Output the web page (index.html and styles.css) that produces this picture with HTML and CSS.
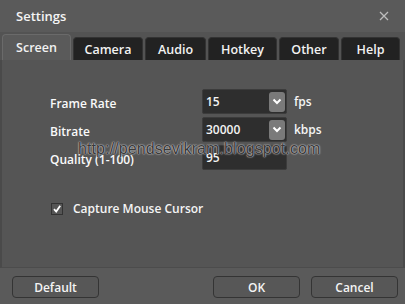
FILE: index.html
```html
<!DOCTYPE html>
<html>
<head>
<meta charset="utf-8">
<link rel="stylesheet" href="styles.css">
</head>
<body>
<div class="window">
  <div class="titlebar">
    <span class="title">Settings</span>
    <svg class="close" width="10" height="10" viewBox="0 0 10 10"><path d="M1 1L9 9M9 1L1 9" stroke="#bdbdbd" stroke-width="1.3"/></svg>
  </div>
  <div class="tabs">
    <div class="tab active w1">Screen</div>
    <div class="tab w2">Camera</div>
    <div class="tab w3">Audio</div>
    <div class="tab w4">Hotkey</div>
    <div class="tab w5">Other</div>
    <div class="tab w6">Help</div>
  </div>
  <div class="panel">
    <div class="form">
      <div class="row">
        <span class="label">Frame Rate</span>
        <div class="field"><span class="val">15</span><span class="drop"><svg width="10" height="7" viewBox="0 0 10 7"><path d="M1.5 1.5L5 5L8.5 1.5" fill="none" stroke="#fff" stroke-width="2"/></svg></span></div>
        <span class="unit">fps</span>
      </div>
      <div class="row">
        <span class="label">Bitrate</span>
        <div class="field"><span class="val">30000</span><span class="drop"><svg width="10" height="7" viewBox="0 0 10 7"><path d="M1.5 1.5L5 5L8.5 1.5" fill="none" stroke="#fff" stroke-width="2"/></svg></span></div>
        <span class="unit">kbps</span>
      </div>
      <div class="row">
        <span class="label">Quality (1-100)</span>
        <div class="field"><span class="val">95</span></div>
      </div>
    </div>
    <div class="check">
      <span class="box"><svg width="10" height="10" viewBox="0 0 10 10"><path d="M2 5.2L4.2 7.5L8.2 1.8" fill="none" stroke="#fff" stroke-width="1.8"/></svg></span>
      <span class="checklabel">Capture Mouse Cursor</span>
    </div>
    <div class="watermark">http://pendsevikram.blogspot.com</div>
  </div>
  <div class="footer">
    <button class="btn">Default</button>
    <div class="right">
      <button class="btn">OK</button>
      <button class="btn">Cancel</button>
    </div>
  </div>
</div>
</body>
</html>
```
FILE: styles.css
```css
html, body {
  margin: 0;
  padding: 0;
}
body {
  width: 405px;
  height: 304px;
  overflow: hidden;
  background: #585858;
  font-family: "Open Sans", "Noto Sans", sans-serif;
  color: #fff;
}
.window {
  display: flex;
  flex-direction: column;
  height: 304px;
}
.titlebar {
  height: 32px;
  display: flex;
  align-items: center;
  justify-content: space-between;
  padding: 0 16px 0 16px;
  background: #5a5a5a;
  box-sizing: border-box;
}
.title {
  font-size: 13px;
  font-weight: 600;
  color: #f4f4f4;
}
.tabs {
  display: flex;
  align-items: flex-end;
  gap: 2px;
  padding-left: 2px;
  height: 28px;
  box-sizing: border-box;
  background: #535353;
}
.tab {
  height: 23px;
  box-sizing: border-box;
  background: #222;
  border: 1px solid #333;
  border-bottom: none;
  border-radius: 4px 4px 0 0;
  display: flex;
  align-items: center;
  justify-content: center;
  font-size: 12.5px;
  font-weight: 600;
  color: #f2f2f2;
}
.tab.active {
  height: 26px;
  background: #5a5a5a;
  border-color: #6a6a6a;
}
.w1 { width: 69px; }
.w2 { width: 70px; }
.w3 { width: 61px; }
.w4 { width: 69px; }
.w5 { width: 60px; }
.w6 { width: 59px; }
.panel {
  position: relative;
  height: 208px;
  background: #555;
  border-left: 2px solid #4a4a4a;
  border-right: 2px solid #4a4a4a;
  border-bottom: 1px solid #4c4c4c;
  box-sizing: border-box;
  padding: 29px 0 0 48px;
}
.form {
  display: flex;
  flex-direction: column;
  gap: 3px;
}
.row {
  display: flex;
  align-items: center;
  height: 25px;
}
.label {
  width: 152px;
  font-size: 12px;
  font-weight: 600;
  color: #fafafa;
  padding-top: 4px;
}
.field {
  width: 85px;
  height: 25px;
  box-sizing: border-box;
  background: #2e2e2e;
  border: 1px solid #3c3c3c;
  border-radius: 2px;
  display: flex;
  align-items: center;
  justify-content: space-between;
  padding: 0 1px 0 3px;
}
.val {
  font-size: 12px;
  font-weight: 600;
  color: #f4f4f4;
}
.drop {
  width: 16px;
  height: 20px;
  background: #7a7a7a;
  border-radius: 3px;
  display: flex;
  align-items: center;
  justify-content: center;
}
.unit {
  margin-left: 7px;
  font-size: 12px;
  font-weight: 600;
  color: #f4f4f4;
}
.check {
  display: flex;
  align-items: center;
  margin-top: 30px;
  margin-left: 1px;
}
.box {
  width: 12px;
  height: 12px;
  box-sizing: border-box;
  border: 1px solid #333;
  background: #555;
  display: flex;
  align-items: center;
  justify-content: center;
}
.checklabel {
  margin-left: 10px;
  font-size: 12px;
  font-weight: 600;
  color: #f4f4f4;
}
.watermark {
  position: absolute;
  left: 76px;
  top: 80px;
  font-family: "Liberation Sans", Arial, sans-serif;
  font-size: 16px;
  letter-spacing: 0.1px;
  color: #3a3a3a;
  text-shadow: 0 0 1px #e0e0e0, 0 0 2px #cfcfcf;
}
.footer {
  flex: 1;
  display: flex;
  justify-content: space-between;
  align-items: flex-start;
  padding: 8px 7px 0 12px;
  background: #5a5a5a;
}
.right {
  display: flex;
  gap: 11px;
}
.btn {
  width: 87px;
  height: 22px;
  background: #575757;
  border: 1px solid #343434;
  border-radius: 4px;
  color: #f4f4f4;
  font-family: "Open Sans", "Noto Sans", sans-serif;
  font-size: 12px;
  font-weight: 600;
  padding: 0;
}
```
